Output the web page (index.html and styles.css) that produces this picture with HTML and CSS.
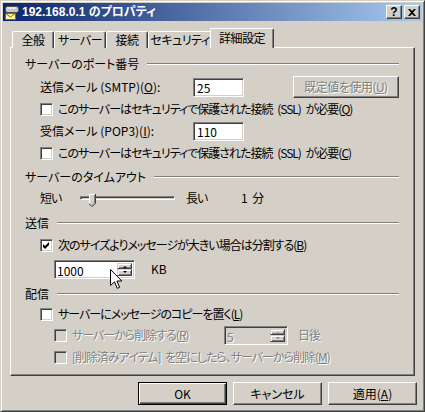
FILE: index.html
```html
<!DOCTYPE html>
<html lang="ja">
<head>
<meta charset="utf-8">
<title>192.168.0.1 のプロパティ</title>
<link rel="stylesheet" href="styles.css">
</head>
<body>

<div class="win">

    <!-- title bar -->
    <div class="title">
        <svg class="ticon" width="16" height="16" viewBox="0 0 16 16">
            <rect x="1.5" y="2.5" width="13" height="6" rx="2" fill="#c8c8c8" stroke="#505050"/>
            <line x1="3" y1="4" x2="12" y2="4" stroke="#fff"/>
            <rect x="1.5" y="9.5" width="10" height="6" fill="#fff7a0" stroke="#8a6a00"/>
            <polyline points="1.5,9.5 6.5,13 11.5,9.5" fill="none" stroke="#8a6a00"/>
        </svg>
        <span class="ttext">192.168.0.1 のプロパティ</span>
        <span class="tbtn help">?</span>
        <span class="tbtn">
            <svg width="8" height="7" viewBox="0 0 8 7"><path d="M0,0 L2,0 L4,2 L6,0 L8,0 L5,3.5 L8,7 L6,7 L4,5 L2,7 L0,7 L3,3.5 Z" fill="#000"/></svg>
        </span>
    </div>

    <!-- tabs -->
    <div class="tabs">
        <div class="tab" style="width:42px">全般</div>
        <div class="tab" style="width:52px">サーバー</div>
        <div class="tab" style="width:42px">接続</div>
        <div class="tab" style="width:64px">セキュリティ</div>
        <div class="tab sel" style="width:64px">詳細設定</div>
    </div>

    <div class="panel">

        <!-- ports -->
        <div class="hdr"><span>サーバーのポート番号</span><i class="etch"></i></div>
        <div class="row mt2">
            <span class="lbl">送信メール (SMTP)(<u>O</u>):</span>
            <div class="edit">25</div>
            <div class="btn dflt dis">既定値を使用(<u>U</u>)</div>
        </div>
        <div class="row">
            <span class="cb"></span>
            <span>このサーバーはセキュリティで保護された接続 (SSL) が必要(<u>Q</u>)</span>
        </div>
        <div class="row">
            <span class="lbl">受信メール (POP3)(<u>I</u>):</span>
            <div class="edit">110</div>
        </div>
        <div class="row">
            <span class="cb"></span>
            <span>このサーバーはセキュリティで保護された接続 (SSL) が必要(<u>C</u>)</span>
        </div>

        <!-- timeout -->
        <div class="hdr mt3"><span>サーバーのタイムアウト</span><i class="etch"></i></div>
        <div class="row slrow">
            <span class="short">短い</span>
            <div class="track">
                <svg class="thumb" width="7" height="13" viewBox="0 0 7 13">
                    <path d="M0,0 H6 V9 L3,12 L0,9 Z" fill="#d4d0c8"/>
                    <polyline points="0.5,9 0.5,0.5 5.5,0.5" fill="none" stroke="#fff"/>
                    <polyline points="6.5,0 6.5,9.2 3,12.7 0,9.7" fill="none" stroke="#404040"/>
                    <polyline points="5.5,1 5.5,8.8 3,11.3" fill="none" stroke="#808080"/>
                </svg>
            </div>
            <span class="long">長い</span>
            <span class="mins">1 分</span>
        </div>

        <!-- send -->
        <div class="hdr mt4"><span>送信</span><i class="etch"></i></div>
        <div class="row mt1">
            <span class="cb">
                <svg width="7" height="7" viewBox="0 0 7 7"><path d="M0,2 L2,4 L6,0 L6,3 L2,7 L0,5 Z" fill="#000"/></svg>
            </span>
            <span>次のサイズよりメッセージが大きい場合は分割する(<u>B</u>)</span>
        </div>
        <div class="row ind2 mt2">
            <div class="spin w81">
                <span class="val">1000</span>
                <span class="updn"><i class="ar up"></i><i class="ar dn"></i></span>
            </div>
            <span class="kb">KB</span>
        </div>

        <!-- delivery -->
        <div class="hdr mt4"><span>配信</span><i class="etch"></i></div>
        <div class="row h20">
            <span class="cb"></span>
            <span>サーバーにメッセージのコピーを置く(<u>L</u>)</span>
        </div>
        <div class="row ind2 dis">
            <span class="cb"></span>
            <span class="dellbl">サーバーから削除する(<u>R</u>)</span>
            <div class="spin w64 off">
                <span class="val">5</span>
                <span class="updn"><i class="ar up"></i><i class="ar dn"></i></span>
            </div>
            <span class="days">日後</span>
        </div>
        <div class="row ind2 dis">
            <span class="cb"></span>
            <span>[削除済みアイテム] を空にしたら、サーバーから削除(<u>M</u>)</span>
        </div>
    </div>

    <!-- dialog buttons -->
    <div class="btns">
        <div class="btn big def">OK</div>
        <div class="btn big">キャンセル</div>
        <div class="btn big">適用(<u>A</u>)</div>
    </div>

    <!-- mouse pointer -->
    <svg class="cursor" width="13" height="21" viewBox="0 0 13 21">
        <path d="M0.5,0.5 L0.5,16.5 L4.5,12.8 L7.3,19.3 L9.6,18.3 L6.9,12 L11.8,12 Z" fill="#fff" stroke="#000"/>
    </svg>
</div>

</body>
</html>
```

FILE: styles.css
```css
body {
    margin: 0;
    background: #d4d0c8;
    font-family: "Noto Sans CJK JP", "Liberation Sans", sans-serif;
    font-size: 12px;
    font-feature-settings: "palt";
    color: #000;
}
.win {
    position: relative;
    width: 425px;
    height: 412px;
    box-sizing: border-box;
    border: 1px solid;
    border-color: #d4d0c8 #404040 #404040 #d4d0c8;
    box-shadow: inset 1px 1px #fff, inset -1px -1px #808080;
    padding: 2px;
    display: flex;
    flex-direction: column;
}

/* title bar */
.title {
    height: 18px;
    flex: none;
    display: flex;
    align-items: center;
    padding: 0 2px 0 1px;
    background: linear-gradient(to right, #0a246a, #a6caf0);
    color: #fff;
}
.ticon {
    margin-right: 2px;
}
.ttext {
    flex: 1;
    font-family: "Liberation Sans", "Noto Sans CJK JP", sans-serif;
    font-weight: bold;
    font-size: 12px;
    line-height: 16px;
}
.tbtn {
    width: 16px;
    height: 14px;
    box-sizing: border-box;
    background: #d4d0c8;
    border: 1px solid;
    border-color: #fff #404040 #404040 #fff;
    box-shadow: inset -1px -1px #808080;
    display: flex;
    align-items: center;
    justify-content: center;
    color: #000;
    font-family: "Liberation Sans", sans-serif;
    font-weight: bold;
    font-size: 12px;
}
.help {
    margin-right: 2px;
}

/* tabs */
.tabs {
    display: flex;
    align-items: flex-end;
    height: 20px;
    margin: 7px 0 0 9px;
    position: relative;
    z-index: 1;
}
.tab {
    height: 17px;
    box-sizing: border-box;
    background: #d4d0c8;
    border-top: 1px solid #fff;
    border-left: 1px solid #fff;
    border-right: 1px solid #404040;
    box-shadow: inset -1px 0 #808080;
    border-radius: 2px 2px 0 0;
    text-align: center;
    line-height: 16px;
    white-space: nowrap;
    letter-spacing: -0.5px;
}
.tab.sel {
    height: 20px;
    margin-left: -2px;
    line-height: 17px;
}

/* page */
.panel {
    margin: -1px 7px 0 7px;
    height: 329px;
    box-sizing: border-box;
    border: 1px solid;
    border-color: #fff #404040 #404040 #fff;
    box-shadow: inset -1px -1px #808080;
    padding: 6px 15px 0 14px;
}
.hdr {
    display: flex;
    align-items: center;
    height: 20px;
    line-height: 16px;
}
.etch {
    flex: 1;
    height: 0;
    border-top: 1px solid #808080;
    border-bottom: 1px solid #fff;
    margin-left: 8px;
}
.row {
    display: flex;
    align-items: center;
    height: 22px;
    padding-left: 15px;
    line-height: 16px;
    white-space: nowrap;
    letter-spacing: -1px;
    word-spacing: 3px;
}
.h20 { height: 20px; }
.ind2 { padding-left: 29px; }
.mt1 { margin-top: 1px; }
.mt2 { margin-top: 2px; }
.mt3 { margin-top: 3px; }
.mt4 { margin-top: 4px; }

.lbl {
    width: 153px;
    letter-spacing: 0;
    word-spacing: 0;
}
.edit {
    width: 51px;
    height: 19px;
    box-sizing: border-box;
    border: 1px solid;
    border-color: #808080 #fff #fff #808080;
    box-shadow: inset 1px 1px #404040, inset -1px -1px #d4d0c8;
    background: #fff;
    padding-left: 3px;
    line-height: 17px;
    letter-spacing: 0;
}

/* checkbox */
.cb {
    flex: none;
    width: 13px;
    height: 13px;
    box-sizing: border-box;
    border: 1px solid;
    border-color: #808080 #fff #fff #808080;
    box-shadow: inset 1px 1px #404040, inset -1px -1px #d4d0c8;
    background: #fff;
    margin-right: 5px;
    display: flex;
    align-items: center;
    justify-content: center;
}
.dis .cb {
    background: #d4d0c8;
}
.dis, .btn.dis {
    color: #808080;
    text-shadow: 1px 1px 0 #fff;
}

/* buttons */
.btn {
    box-sizing: border-box;
    border: 1px solid;
    border-color: #fff #404040 #404040 #fff;
    box-shadow: inset -1px -1px #808080;
    display: flex;
    align-items: center;
    justify-content: center;
    line-height: 16px;
}
.dflt {
    width: 106px;
    height: 22px;
    margin-left: auto;
    letter-spacing: -0.5px;
}
.btns {
    display: flex;
    justify-content: flex-end;
    gap: 6px;
    margin: 6px 5px 0 0;
}
.big {
    width: 89px;
    height: 23px;
}
.btn.def {
    border-color: #000;
    box-shadow: inset 1px 1px #fff, inset -1px -1px #404040, inset -2px -2px #808080;
}

/* trackbar */
.short {
    width: 40px;
}
.track {
    position: relative;
    width: 95px;
    height: 4px;
    box-sizing: border-box;
    border: 1px solid;
    border-color: #808080 #fff #fff #808080;
    box-shadow: inset 1px 1px #404040, inset -1px -1px #d4d0c8;
}
.thumb {
    position: absolute;
    left: 8px;
    top: -3px;
}
.long {
    width: 55px;
    margin-left: 11px;
}
.mins {
    letter-spacing: 0;
    word-spacing: 2px;
}

/* spinner */
.spin {
    display: flex;
    height: 19px;
    box-sizing: border-box;
    border: 1px solid;
    border-color: #808080 #fff #fff #808080;
    box-shadow: inset 1px 1px #404040, inset -1px -1px #d4d0c8;
    background: #fff;
    padding: 2px;
    letter-spacing: 0;
}
.spin.off {
    background: #d4d0c8;
}
.w81 { width: 81px; }
.w64 { width: 64px; }
.val {
    flex: 1;
    line-height: 15px;
}
.updn {
    width: 15px;
    display: flex;
    flex-direction: column;
}
.ar {
    flex: 1;
    background: #d4d0c8;
    border: 1px solid;
    border-color: #d4d0c8 #404040 #404040 #d4d0c8;
    box-shadow: inset 1px 1px #fff, inset -1px -1px #808080;
    position: relative;
}
.ar::after {
    content: "";
    position: absolute;
    left: 5px;
    top: 2px;
    border-left: 2px solid transparent;
    border-right: 2px solid transparent;
}
.ar.up::after { border-bottom: 2px solid #000; }
.ar.dn::after { border-top: 2px solid #000; top: 1px; }
.off .ar.up::after { border-bottom-color: #808080; }
.off .ar.dn::after { border-top-color: #808080; }
.kb {
    margin-left: 16px;
    letter-spacing: 0;
}
.dellbl {
    width: 152px;
}
.days {
    margin-left: 10px;
}

/* pointer */
.cursor {
    position: absolute;
    left: 109px;
    top: 268px;
}
```
